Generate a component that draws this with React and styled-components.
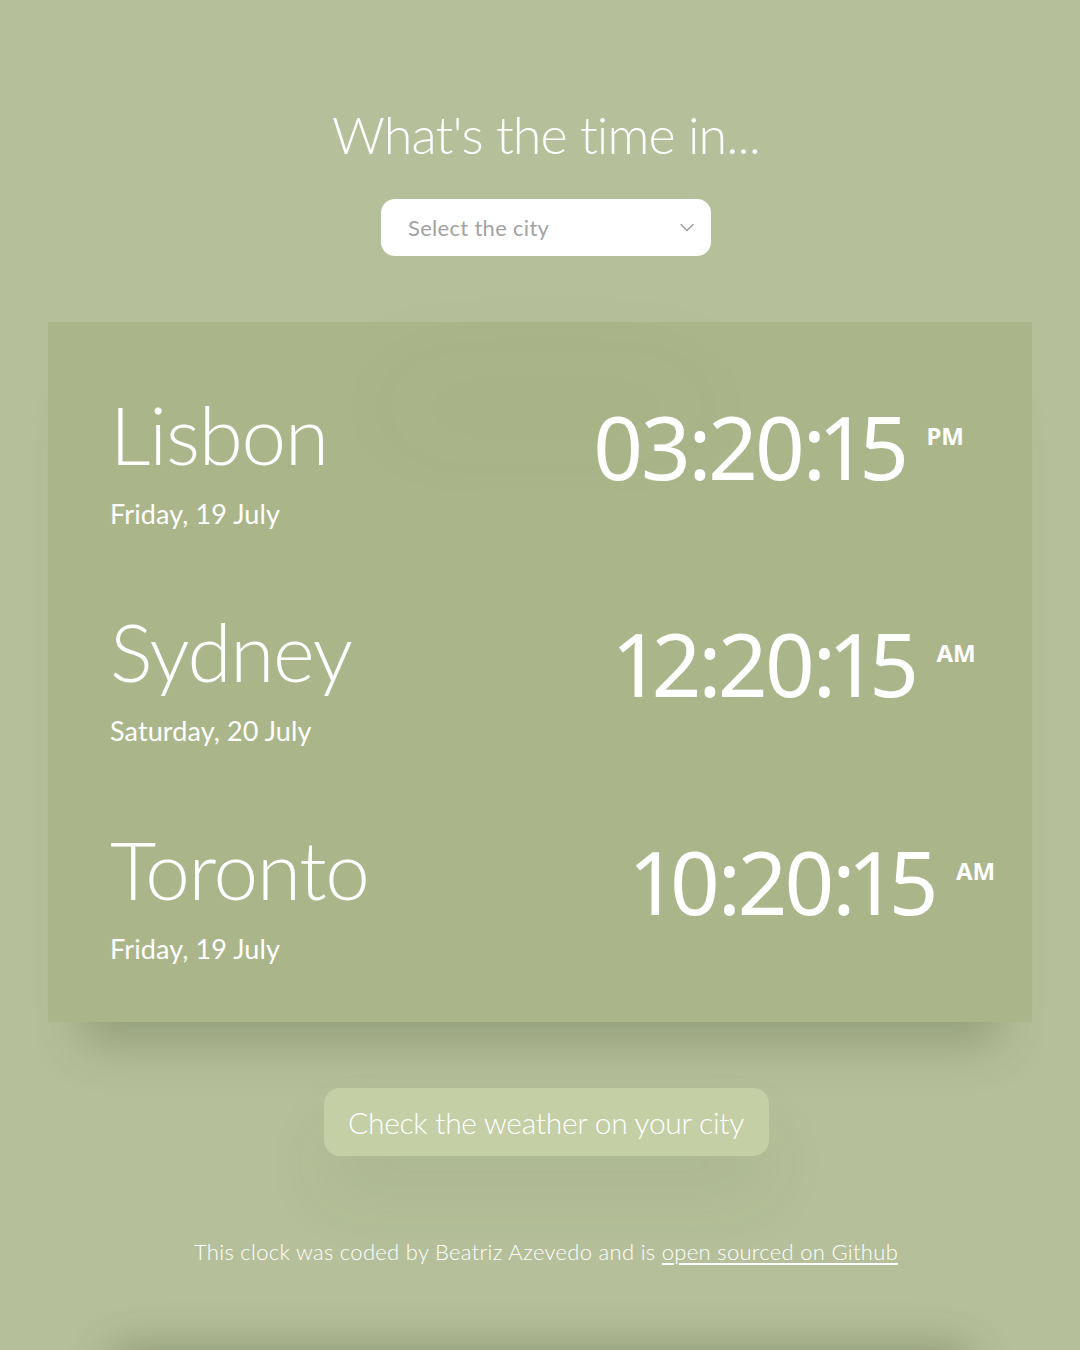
import React from "react";
import styled, { createGlobalStyle } from "styled-components";

const Global = createGlobalStyle`
  html, body { margin: 0; padding: 0; background: #b5c09a; }
  body { font-family: "Lato", "Open Sans", sans-serif; color: #fff; overflow: hidden; }
`;

const Page = styled.div`
  min-height: 1350px;
  background: #b5c09a;
  display: flex;
  flex-direction: column;
  align-items: center;
  padding-top: 108px;
  box-sizing: border-box;
`;

const Shifted = styled.div`
  margin-left: 12px;
  display: flex;
  justify-content: center;
`;

const Title = styled.h1`
  margin: 0;
  font-family: "Lato", sans-serif;
  font-weight: 300;
  font-size: 52px;
  line-height: 1;
  letter-spacing: -0.9px;
  color: #fff;
`;

const SelectBox = styled.div`
  margin-top: 39px;
  width: 330px;
  height: 57px;
  box-sizing: border-box;
  background: #fff;
  border-radius: 14px;
  display: flex;
  align-items: center;
  justify-content: space-between;
  padding: 0 17px 0 27px;
  color: #a2a2a2;
  font-family: "Lato", sans-serif;
  font-size: 22px;
  font-weight: 400;
  letter-spacing: 0.3px;
  box-shadow: 0 180px 110px 10px rgba(60, 70, 40, 0.045);
`;

const Panel = styled.section`
  margin-top: 66px;
  width: 984px;
  box-sizing: border-box;
  background: rgba(150, 165, 110, 0.355);
  padding: 72px 62px 57px;
  display: flex;
  flex-direction: column;
  gap: 81px;
  box-shadow: 0 55px 45px -34px rgba(70, 80, 50, 0.3);
`;

const Row = styled.div`
  display: flex;
  align-items: flex-start;
  gap: 265px;
`;

const CityBlock = styled.div`
  display: flex;
  flex-direction: column;
`;

const CityName = styled.div`
  font-family: "Lato", sans-serif;
  font-weight: 300;
  font-size: 80px;
  line-height: 1;
  letter-spacing: -1.2px;
`;

const DateText = styled.div`
  margin-top: 24px;
  font-family: "Lato", sans-serif;
  font-weight: 400;
  font-size: 27px;
  line-height: 1.2;
  letter-spacing: 0.1px;
`;

const TimeBlock = styled.div`
  display: flex;
  align-items: flex-start;
  margin-top: 9px;
`;

const Digits = styled.div`
  font-family: "Noto Sans", sans-serif;
  font-weight: 400;
  font-size: 87px;
  line-height: 1;
  letter-spacing: -2.6px;
  font-variant-numeric: proportional-nums;
`;

const Meridiem = styled.span`
  margin-left: 20px;
  margin-top: 21px;
  font-family: "Noto Sans", sans-serif;
  font-weight: 700;
  font-size: 24px;
  line-height: 1;
`;

const WeatherButton = styled.button`
  margin-top: 66px;
  width: 445px;
  height: 68px;
  border: none;
  border-radius: 16px;
  background: #c4cfa6;
  color: #fff;
  font-family: "Lato", sans-serif;
  font-weight: 300;
  font-size: 30px;
  letter-spacing: -0.3px;
  cursor: pointer;
  box-shadow: 0 40px 70px rgba(70, 80, 50, 0.08);
`;

const Footer = styled.p`
  margin: 83px 0 0;
  font-family: "Lato", sans-serif;
  font-weight: 300;
  font-size: 22px;
  line-height: 1.2;
  letter-spacing: 0.3px;
  color: #fff;
`;

const Link = styled.a`
  color: #fff;
  text-decoration: underline;
  text-underline-offset: 3px;
`;

const NextSection = styled.div`
  margin-top: 86px;
  width: 880px;
  height: 200px;
  border-radius: 40px;
  background: #b5c09a;
  box-shadow: 0 -8px 40px rgba(60, 70, 40, 0.3);
`;

const Chevron = () => (
  <svg width="14" height="9" viewBox="0 0 14 9" fill="none">
    <path d="M1 1.5 L7 7.5 L13 1.5" stroke="#9a9a9a" strokeWidth="1.4" strokeLinecap="round" strokeLinejoin="round" />
  </svg>
);

const rows = [
  { city: "Lisbon", date: "Friday, 19 July", time: "03:20:15", m: "PM" },
  { city: "Sydney", date: "Saturday, 20 July", time: "12:20:15", m: "AM" },
  { city: "Toronto", date: "Friday, 19 July", time: "10:20:15", m: "AM" },
];

export default function App() {
  return (
    <>
      <Global />
      <Page>
        <Shifted>
          <Title>What's the time in...</Title>
        </Shifted>
        <Shifted>
          <SelectBox>
            <span>Select the city</span>
            <Chevron />
          </SelectBox>
        </Shifted>
        <Panel>
          {rows.map((r) => (
            <Row key={r.city}>
              <CityBlock>
                <CityName>{r.city}</CityName>
                <DateText>{r.date}</DateText>
              </CityBlock>
              <TimeBlock>
                <Digits>{r.time}</Digits>
                <Meridiem>{r.m}</Meridiem>
              </TimeBlock>
            </Row>
          ))}
        </Panel>
        <Shifted>
          <WeatherButton>Check the weather on your city</WeatherButton>
        </Shifted>
        <Shifted>
          <Footer>
            This clock was coded by Beatriz Azevedo and is{" "}
            <Link href="#">open sourced on Github</Link>
          </Footer>
        </Shifted>
        <NextSection />
      </Page>
    </>
  );
}
